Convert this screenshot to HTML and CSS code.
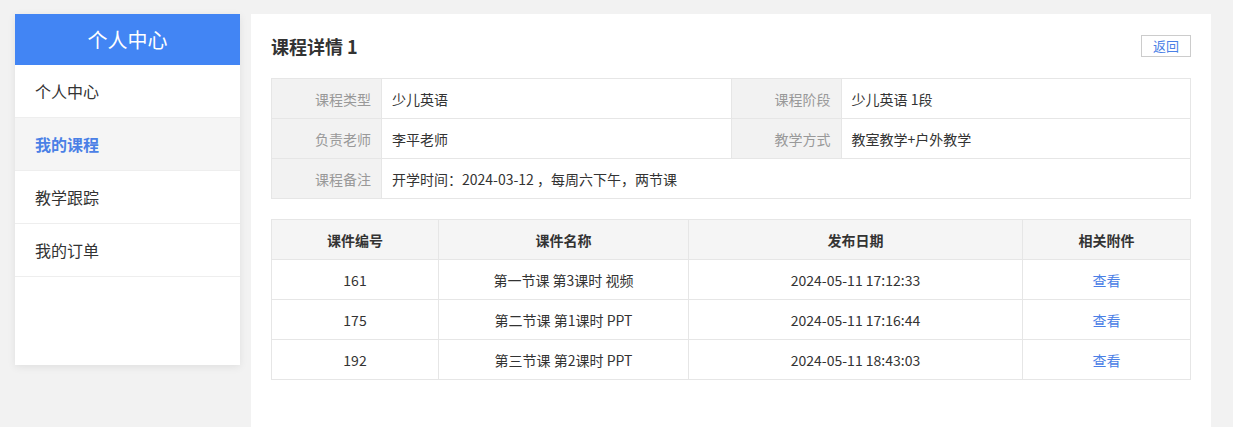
FILE: index.html
```html
<!DOCTYPE html>
<html>
<head>
  <title>课程详情</title>
  <link rel="stylesheet" href="styles.css">
</head>
<body>
  <div class="page">
    <!-- Sidebar -->
    <aside class="sidebar">
      <div class="sidebar-title">个人中心</div>
      <ul class="side-menu">
        <li><a href="#">个人中心</a></li>
        <li class="active"><a href="#">我的课程</a></li>
        <li><a href="#">教学跟踪</a></li>
        <li><a href="#">我的订单</a></li>
      </ul>
    </aside>

    <!-- Main -->
    <main class="panel">
      <div class="panel-head">
        <h2>课程详情 1</h2>
        <a href="#" class="btn-back">返回</a>
      </div>

      <table class="info-table">
        <colgroup>
          <col class="c-label"><col class="c-value"><col class="c-label"><col class="c-value">
        </colgroup>
        <tr>
          <th>课程类型</th><td>少儿英语</td>
          <th>课程阶段</th><td>少儿英语 1段</td>
        </tr>
        <tr>
          <th>负责老师</th><td>李平老师</td>
          <th>教学方式</th><td>教室教学+户外教学</td>
        </tr>
        <tr>
          <th>课程备注</th><td colspan="3">开学时间：2024-03-12 ，每周六下午，两节课</td>
        </tr>
      </table>

      <table class="list-table">
        <colgroup>
          <col style="width:167px"><col style="width:250px"><col style="width:334px"><col>
        </colgroup>
        <thead>
          <tr><th>课件编号</th><th>课件名称</th><th>发布日期</th><th>相关附件</th></tr>
        </thead>
        <tbody>
          <tr><td>161</td><td>第一节课 第3课时 视频</td><td>2024-05-11 17:12:33</td><td><a href="#">查看</a></td></tr>
          <tr><td>175</td><td>第二节课 第1课时 PPT</td><td>2024-05-11 17:16:44</td><td><a href="#">查看</a></td></tr>
          <tr><td>192</td><td>第三节课 第2课时 PPT</td><td>2024-05-11 18:43:03</td><td><a href="#">查看</a></td></tr>
        </tbody>
      </table>
    </main>
  </div>
</body>
</html>
```
FILE: styles.css
```css
/* page */
body {
  margin: 0;
  background-color: #f2f2f2;
  font-family: "Noto Sans CJK SC", "Open Sans", sans-serif;
  color: #333;
  overflow: hidden;
}

a {
  text-decoration: none;
}

.page {
  display: flex;
  align-items: flex-start;
  gap: 11px;
  padding: 14px 22px 0 15px;
}

/* sidebar */
.sidebar {
  width: 225px;
  height: 351px;
  flex-shrink: 0;
  background-color: #fff;
  box-shadow: 0 2px 8px rgba(0, 0, 0, 0.08);
}

.sidebar-title {
  height: 51px;
  line-height: 51px;
  background-color: #4285f4;
  color: #fff;
  font-size: 20px;
  text-align: center;
}

.side-menu {
  list-style: none;
  margin: 0;
  padding: 0;
}

.side-menu li {
  border-bottom: 1px solid #eee;
}

.side-menu a {
  display: block;
  height: 52px;
  line-height: 52px;
  padding-left: 20px;
  font-size: 16px;
  color: #333;
}

.side-menu .active {
  background-color: #f5f5f5;
}

.side-menu .active a {
  color: #4a80e6;
  font-weight: bold;
}

/* main panel */
.panel {
  flex: 1;
  min-height: 371px;
  background-color: #fff;
  padding: 21px 20px;
}

.panel-head {
  display: flex;
  justify-content: space-between;
  align-items: center;
  height: 22px;
  margin-bottom: 21px;
}

.panel-head h2 {
  margin: 0;
  font-size: 18px;
  font-weight: bold;
  color: #333;
}

.btn-back {
  display: inline-block;
  width: 48px;
  height: 20px;
  line-height: 20px;
  border: 1px solid #ccc;
  text-align: center;
  font-size: 13px;
  color: #4a80e6;
}

table {
  width: 920px;
  border-collapse: collapse;
  font-size: 14px;
  table-layout: fixed;
}

th,
td {
  height: 39px;
  padding: 0 10px;
  border: 1px solid #e6e6e6;
}

/* info table */
.info-table {
  margin-bottom: 20px;
}

.info-table .c-label {
  width: 110px;
}

.info-table th {
  background-color: #f2f2f2;
  color: #999;
  font-weight: normal;
  text-align: right;
}

.info-table td {
  color: #333;
}

/* list table */
.list-table th {
  background-color: #f5f5f5;
  font-weight: bold;
  color: #333;
}

.list-table td {
  text-align: center;
  color: #333;
}

.list-table a {
  color: #4a80e6;
}
```
